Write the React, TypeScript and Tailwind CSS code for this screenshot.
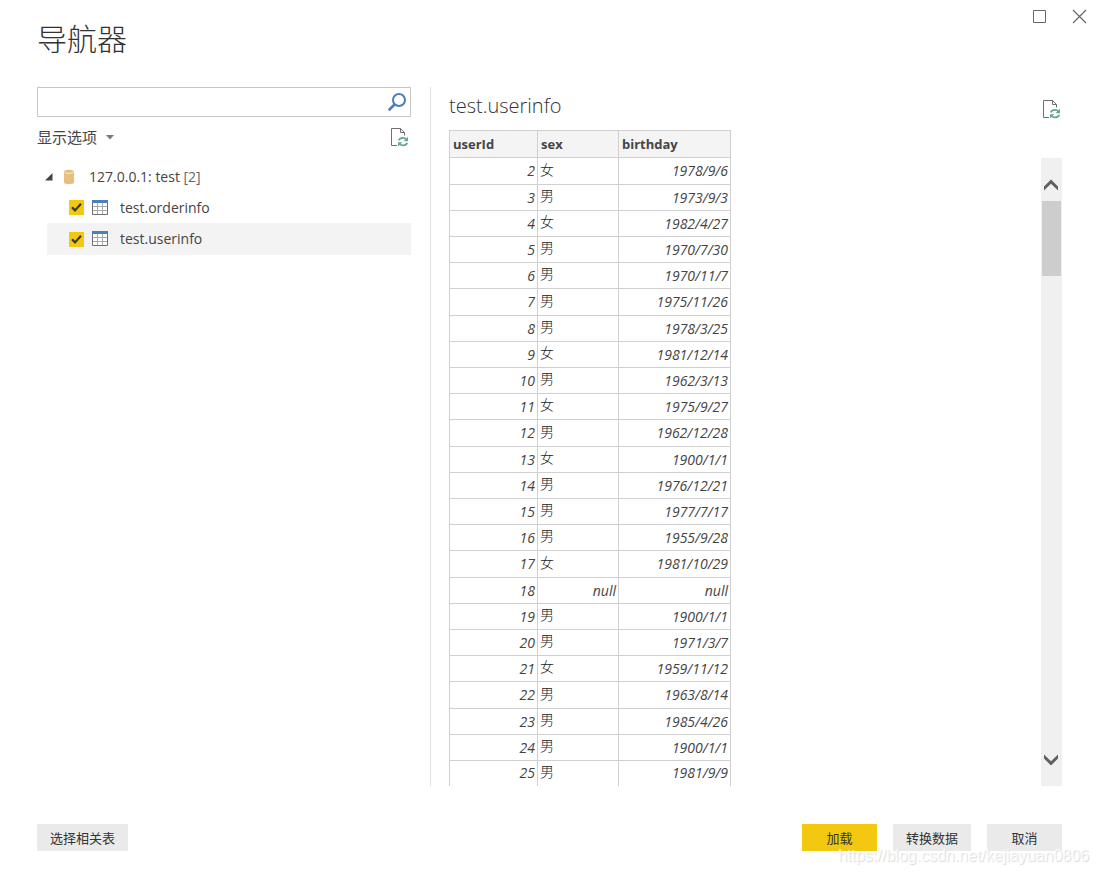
import { useState } from "react";

type User = { id: number; sex: string | null; birthday: string | null };

const users: User[] = [
  { id: 2, sex: "女", birthday: "1978/9/6" },
  { id: 3, sex: "男", birthday: "1973/9/3" },
  { id: 4, sex: "女", birthday: "1982/4/27" },
  { id: 5, sex: "男", birthday: "1970/7/30" },
  { id: 6, sex: "男", birthday: "1970/11/7" },
  { id: 7, sex: "男", birthday: "1975/11/26" },
  { id: 8, sex: "男", birthday: "1978/3/25" },
  { id: 9, sex: "女", birthday: "1981/12/14" },
  { id: 10, sex: "男", birthday: "1962/3/13" },
  { id: 11, sex: "女", birthday: "1975/9/27" },
  { id: 12, sex: "男", birthday: "1962/12/28" },
  { id: 13, sex: "女", birthday: "1900/1/1" },
  { id: 14, sex: "男", birthday: "1976/12/21" },
  { id: 15, sex: "男", birthday: "1977/7/17" },
  { id: 16, sex: "男", birthday: "1955/9/28" },
  { id: 17, sex: "女", birthday: "1981/10/29" },
  { id: 18, sex: null, birthday: null },
  { id: 19, sex: "男", birthday: "1900/1/1" },
  { id: 20, sex: "男", birthday: "1971/3/7" },
  { id: 21, sex: "女", birthday: "1959/11/12" },
  { id: 22, sex: "男", birthday: "1963/8/14" },
  { id: 23, sex: "男", birthday: "1985/4/26" },
  { id: 24, sex: "男", birthday: "1900/1/1" },
  { id: 25, sex: "男", birthday: "1981/9/9" },
];

function RefreshPageIcon() {
  return (
    <svg width="18" height="20" viewBox="0 0 18 20" fill="none" aria-hidden="true">
      <path d="M6 18.5H.5V1.5H9.5L13.5 5.5V8.5" stroke="#6f6f6f" />
      <path d="M9.5 1.5V5.5H13.5" stroke="#6f6f6f" />
      <path d="M7.8 13.4C8.6 11.6 10.2 10.9 12 10.9C13.4 10.9 14.6 11.5 15.4 12.6" stroke="#67a791" strokeWidth="1.9" />
      <path d="M17 9.8V14.2H12.6Z" fill="#67a791" />
      <path d="M16.2 15.8C15.4 17.6 13.8 18.4 12 18.4C10.6 18.4 9.4 17.8 8.6 16.7" stroke="#67a791" strokeWidth="1.9" />
      <path d="M7 19.6V15.2H11.4Z" fill="#67a791" />
    </svg>
  );
}

function SearchIcon() {
  return (
    <svg width="20" height="20" viewBox="0 0 20 20" fill="none" stroke="#4a7ebb" strokeWidth="2" aria-hidden="true">
      <circle cx="12" cy="8" r="6" />
      <path d="M7.8 12.3L1.7 18.2" strokeWidth="2.6" />
    </svg>
  );
}

function DatabaseIcon() {
  return (
    <svg width="12" height="16" viewBox="0 0 12 16" aria-hidden="true">
      <path d="M1 2.5C1 .2 11 .2 11 2.5V13.5C11 15.8 1 15.8 1 13.5Z" fill="#e8c07d" />
      <path d="M1.5 3.2C3 4.8 9 4.8 10.5 3.2" stroke="#f8ecd6" fill="none" />
    </svg>
  );
}

function TableIcon() {
  return (
    <svg width="16" height="16" viewBox="0 0 16 16" fill="none" aria-hidden="true">
      <path d="M.5 .5H15.5V14.5H.5Z" fill="#fff" stroke="#6f6f6f" />
      <path d="M5.5 3V14M10.5 3V14M1 6.5H15M1 10.5H15" stroke="#a9a9a9" />
      <path d="M0 0H16V3H0Z" fill="#4a80bd" />
    </svg>
  );
}

function TreeItem({ name, selected }: { name: string; selected?: boolean }) {
  const [checked, setChecked] = useState(true);
  return (
    <li className={`ml-[10px] flex items-center pl-[22px] ${selected ? "h-8 bg-[#f3f3f3]" : "h-[31px]"}`}>
      <label className="flex items-center">
        <span className="mr-2 grid size-[15px] place-items-center">
          <input
            type="checkbox"
            checked={checked}
            onChange={(e) => setChecked(e.target.checked)}
            className="col-start-1 row-start-1 size-[15px] appearance-none border border-[#f2c811] checked:bg-[#f2c811]"
          />
          {checked && (
            <svg className="pointer-events-none col-start-1 row-start-1" width="11" height="11" viewBox="0 0 11 11" fill="none" aria-hidden="true">
              <path d="M1 5.2L4 8.4L10 1.8" stroke="#3b3a2c" strokeWidth="2.2" />
            </svg>
          )}
        </span>
        <TableIcon />
        <span className="ml-3">{name}</span>
      </label>
    </li>
  );
}

export default function App() {
  const [query, setQuery] = useState("");
  const cell = "border border-[#d0d0d0] py-0 pr-[2px] pl-[3px]";
  const value = `${cell} text-right text-[14px] italic`;
  return (
    <div className="flex min-h-screen flex-col bg-white font-['Open_Sans','Noto_Sans_CJK_SC',sans-serif] text-[14px] leading-5 text-[#444]">
      <header className="flex h-[87px] items-start justify-between pr-[11px] pl-[37px]">
        <h1 className="pt-4 text-[30px] leading-[46px] font-light text-[#333]">导航器</h1>
        <div className="flex gap-6 pt-2">
          <button type="button" aria-label="最大化" className="grid size-4 place-items-center">
            <svg width="16" height="16" viewBox="0 0 16 16" fill="none" stroke="#666" aria-hidden="true">
              <path d="M1.5 2.5H13.5V14.5H1.5Z" />
            </svg>
          </button>
          <button type="button" aria-label="关闭" className="grid size-4 place-items-center">
            <svg width="16" height="16" viewBox="0 0 16 16" fill="none" stroke="#666" strokeWidth="1.2" aria-hidden="true">
              <path d="M1 2L14 15M14 2L1 15" />
            </svg>
          </button>
        </div>
      </header>

      <main className="flex flex-1 pr-[37px] pl-[37px]">
        <section className="w-[374px] shrink-0">
          <div className="flex h-[30px] items-center border border-[#c6c6c6] pr-[3px]">
            <input
              type="text"
              aria-label="搜索"
              value={query}
              onChange={(e) => setQuery(e.target.value)}
              className="h-full min-w-0 flex-1 px-2 outline-none"
            />
            <button type="button" aria-label="搜索">
              <SearchIcon />
            </button>
          </div>
          <div className="flex h-10 items-center justify-between pr-[2px]">
            <button type="button" className="flex items-center gap-[9px] text-[15px]">
              显示选项
              <svg width="8" height="5" viewBox="0 0 8 5" aria-hidden="true">
                <path d="M0 0H8L4 4.5Z" fill="#777" />
              </svg>
            </button>
            <button type="button" aria-label="刷新">
              <RefreshPageIcon />
            </button>
          </div>
          <ul className="pt-1">
            <li>
              <div className="flex h-[31px] items-center pl-2">
                <button type="button" aria-label="折叠">
                  <svg width="8" height="8" viewBox="0 0 8 8" aria-hidden="true">
                    <path d="M7.5 0V7.5H0Z" fill="#444" />
                  </svg>
                </button>
                <span className="mr-[14px] ml-[10px]">
                  <DatabaseIcon />
                </span>
                <span>
                  127.0.0.1: test <span className="text-[#666]">[2]</span>
                </span>
              </div>
              <ul>
                <TreeItem name="test.orderinfo" />
                <TreeItem name="test.userinfo" selected />
              </ul>
            </li>
          </ul>
        </section>

        <section className="ml-[19px] flex min-w-0 flex-1 flex-col border-l border-[#e2e2e2] pl-[18px]">
          <div className="flex h-[43px] items-start justify-between pt-1 pr-[1px]">
            <h2 className="text-[20px] leading-[30px] font-light text-[#333]">test.userinfo</h2>
            <button type="button" aria-label="刷新预览" className="pt-2">
              <RefreshPageIcon />
            </button>
          </div>
          <div className="flex flex-1 justify-between">
            <table className="w-[282px] table-fixed border-collapse self-start text-[13px] leading-5">
              <colgroup>
                <col className="w-[88px]" />
                <col className="w-[81px]" />
                <col />
              </colgroup>
              <thead>
                <tr className="h-[27px] bg-[#f4f4f4] text-left">
                  <th className={cell}>userId</th>
                  <th className={cell}>sex</th>
                  <th className={cell}>birthday</th>
                </tr>
              </thead>
              <tbody className="[&>tr:last-child>td]:border-b-0">
                {users.map((u) => (
                  <tr key={u.id} className="h-[26px] last:h-[25px] nth-[5n+1]:h-[27px]">
                    <td className={value}>{u.id}</td>
                    {u.sex ? (
                      <td className="border border-[#d0d0d0] pr-[2px] pb-[3px] pl-[2px] text-[14px] font-light text-[#222]">
                        {u.sex}
                      </td>
                    ) : (
                      <td className={value}>null</td>
                    )}
                    <td className={value}>{u.birthday ?? "null"}</td>
                  </tr>
                ))}
              </tbody>
            </table>
            <div className="mt-7 flex w-[21px] flex-col items-center bg-[#f0f0f0]">
              <button type="button" aria-label="向上滚动" className="grid h-[43px] w-full place-items-center pt-[10px] pr-[1px]">
                <svg width="14" height="12" viewBox="0 0 14 12" fill="none" aria-hidden="true">
                  <path d="M0 7.5L7 .5L14 7.5V11.5L7 4.8L0 11.5Z" fill="#606060" />
                </svg>
              </button>
              <div className="h-[75px] w-[19px] bg-[#cdcdcd]" />
              <button type="button" aria-label="向下滚动" className="mt-auto grid h-[43px] w-full place-items-center pr-[1px] pb-[10px]">
                <svg width="14" height="12" viewBox="0 0 14 12" fill="none" aria-hidden="true">
                  <path d="M0 4.5L7 11.5L14 4.5V.5L7 7.2L0 .5Z" fill="#606060" />
                </svg>
              </button>
            </div>
          </div>
        </section>
      </main>

      <footer className="relative flex gap-4 px-[37px] pt-[38px] pb-[23px] text-[13px] text-[#333]">
        <button type="button" className="mr-auto h-[27px] w-[91px] bg-[#eaeaea]">选择相关表</button>
        <button type="button" className="h-[27px] w-[75px] bg-[#f2c811]">加载</button>
        <button type="button" className="h-[27px] w-[78px] bg-[#eaeaea]">转换数据</button>
        <button type="button" className="h-[27px] w-[75px] bg-[#eaeaea]">取消</button>
        <span className="pointer-events-none absolute right-[10px] bottom-2 font-['Liberation_Sans',sans-serif] text-[16px] leading-5 text-white/80 [text-shadow:1px_1px_1px_#d8d8d8]">
          https://blog.csdn.net/kejiayuan0806
        </span>
      </footer>
    </div>
  );
}
